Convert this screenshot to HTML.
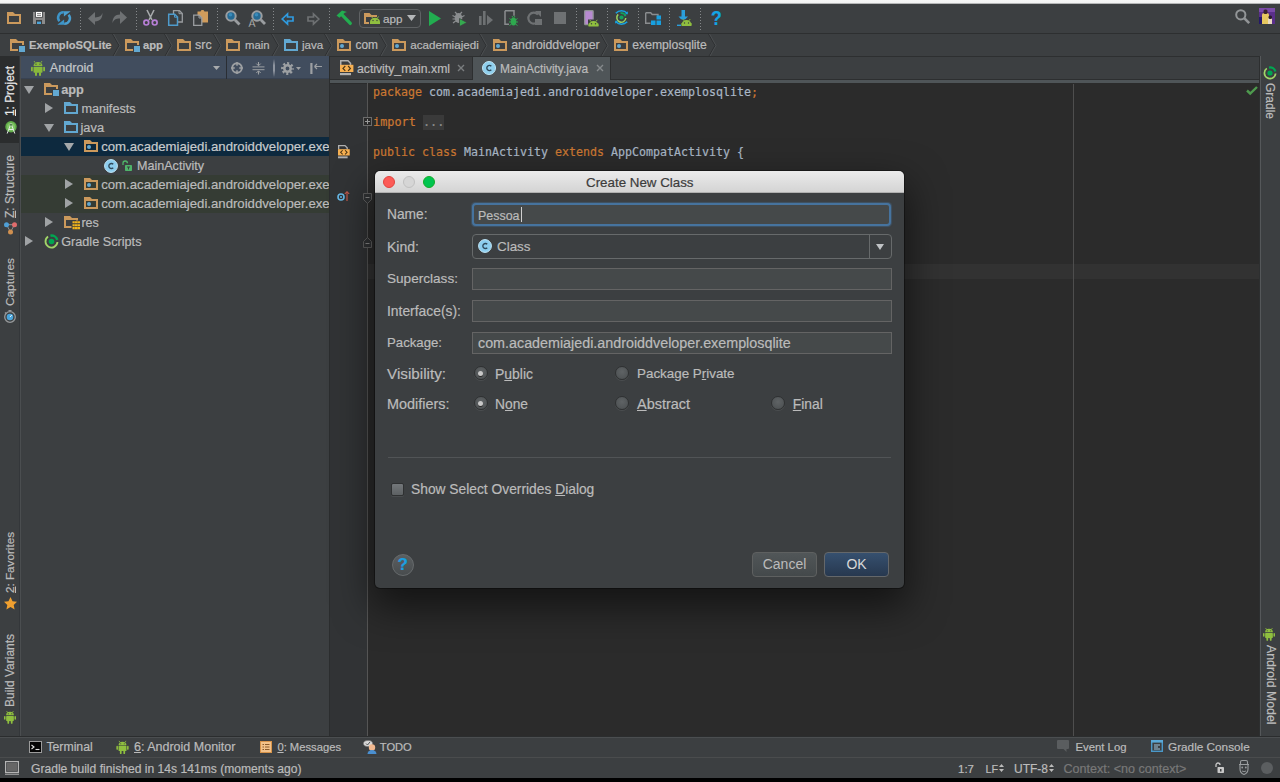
<!DOCTYPE html>
<html><head><meta charset="utf-8"><title>Create New Class</title>
<style>
*{box-sizing:border-box;margin:0;padding:0}
html,body{width:1280px;height:782px;overflow:hidden;background:#3c3f41}
body{position:relative;font-family:"Liberation Sans",sans-serif;font-size:13px;color:#bbbbbb;-webkit-font-smoothing:antialiased}
.a{position:absolute}
.t{position:absolute;white-space:nowrap;line-height:16px;height:16px;-webkit-text-stroke:0.2px}
svg{position:absolute;overflow:visible}
#topstrip{left:0;top:0;width:1280px;height:4px;background:linear-gradient(#f6f6f6 0,#f2f2f2 70%,#8a8c8d 100%)}
#toolbar{left:0;top:4px;width:1280px;height:29px;background:#3c3f41}
#tbline{left:0;top:33px;width:1280px;height:1px;background:#2d2f30}
#nav{left:0;top:34px;width:1280px;height:22px;background:#3c3f41}
.sep{position:absolute;top:8px;width:1px;height:22px;background:repeating-linear-gradient(#85888a 0 1px,transparent 1px 3px)}
.nv{top:37px;font-size:13px;color:#bbbbbb}
.chev{position:absolute;top:34px;width:7px;height:22px}
#lstripe{left:0;top:56px;width:20px;height:681px;background:#3c3f41}
#lstripeb{left:19px;top:56px;width:2px;height:681px;background:linear-gradient(90deg,#34373a 0 1px,#4b4e50 1px 2px)}
#lsel{left:0;top:56px;width:19px;height:87px;background:#2b2d2e}
.vt{position:absolute;white-space:nowrap;font-size:12px;line-height:14px;height:14px;color:#bbbbbb;transform-origin:0 0;-webkit-text-stroke:0.2px}
.vl{transform:rotate(-90deg)}
.vr{transform:rotate(90deg)}
#twh{left:21px;top:56px;width:308px;height:23px;background:#414d5e;border-bottom:1px solid #384252}
#tree{left:21px;top:79px;width:308px;height:658px;background:#3c3f41;overflow:hidden}
.row{position:absolute;left:0;width:308px;height:19px}
.tr{position:absolute;white-space:nowrap;font-size:13px;line-height:19px;height:19px;color:#bbbbbb;top:0;-webkit-text-stroke:0.2px}
#split{left:329px;top:56px;width:1.500px;height:681px;background:#2b2d2e}
#tabs{left:330px;top:56px;width:929px;height:24px;background:#3c3f41;border-top:1px solid #2d2f30;border-bottom:1px solid #2d2f30}
#tabline{left:330px;top:80px;width:929px;height:4px;background:#4f5558;border-bottom:1px solid #2a2b2c}
#gutter{left:330px;top:84px;width:37px;height:653px;background:#313335}
#gline{left:367px;top:83px;width:1px;height:654px;background:#555555}
#editor{left:368px;top:83px;width:891px;height:654px;background:#2b2b2b}
#curline{left:368px;top:264px;width:891px;height:15px;background:#323232}
#margin{left:1073px;top:84px;width:1px;height:652px;background:#4e4e4e}
.code{position:absolute;left:373px;white-space:pre;font-family:"DejaVu Sans Mono","Liberation Mono",monospace;font-size:11.8px;line-height:15px;height:15px;color:#a9b7c6;-webkit-text-stroke:0.2px}
.k{color:#cc7832}
#rstripe{left:1259px;top:56px;width:21px;height:681px;background:linear-gradient(90deg,#2d2f30 0 1px,#55585a 1px 2px,#3c3f41 2px)}
#bstripe{left:0;top:736px;width:1280px;height:22px;background:linear-gradient(#2b2d2e 0 1px,#4b4e50 1px 2px,#3c3f41 2px)}
#status{left:0;top:757px;width:1280px;height:21px;background:#3c3f41;border-top:1px solid #4a4c4d}
#bblack{left:0;top:778px;width:1280px;height:4px;background:#000}
.bt{font-size:12px;top:738.5px;color:#bbbbbb}
.st{font-size:12px;top:760.5px;color:#bbbbbb}
#dlg{left:375px;top:171px;width:529px;height:417px;background:#3c3f41;border-radius:5px;box-shadow:0 16px 38px 3px rgba(0,0,0,.55),0 0 0 1px rgba(0,0,0,.35);overflow:hidden}
#dtitle{left:0;top:0;width:529px;height:22px;background:linear-gradient(#ebebeb,#d4d4d4);border-bottom:1px solid #b0b0b0}
.tl{position:absolute;top:5px;width:12px;height:12px;border-radius:50%}
.dl{font-size:14px;color:#bbbbbb;left:12px}
.fld{position:absolute;left:97px;width:420px;height:22px;background:#45494a;border:1px solid #646464}
.u{text-decoration:underline}
.radio{position:absolute;width:14px;height:14px;border-radius:50%;background:radial-gradient(circle at 50% 40%,#5f6365,#4a4e50);border:1px solid #2f3132;box-shadow:0 1px 0 rgba(255,255,255,.08)}
.radio.on:after{content:"";position:absolute;left:3.5px;top:3.5px;width:5px;height:5px;border-radius:50%;background:#c8c8c8;box-shadow:0 1px 0 #2a2a2a}
.btn{position:absolute;top:381px;height:25px;width:65px;border-radius:4px;font-size:14px;line-height:23px;text-align:center;color:#bbbbbb;border:1px solid #5e6060;background:linear-gradient(#515658,#44494b)}
</style></head><body>
<div class="a" id="toolbar"></div>
<div class="a" id="topstrip"></div>
<div class="a" id="tbline"></div>
<div class="a" id="nav"></div>
<!--TOOLBAR-->
<svg style="left:7px;top:12px" width="14" height="12" viewBox="0 0 14 12"><path d="M0 0h6l2 2h6v10H0z" fill="#cb995c"></path><rect x="2" y="4" width="10" height="6" fill="#3c3f41"></rect></svg>
<svg style="left:33px;top:12px" width="12" height="12" viewBox="0 0 12 12"><path d="M0 0h12v12H0z" fill="#8c8c8c"></path><rect x="2.6" y="-0.5" width="6.8" height="5.8" fill="#fff" stroke="#3c3f41" stroke-width="0.8"></rect><path d="M4 1.6h4M4 3.4h4" stroke="#666" stroke-width="0.8"></path><rect x="3" y="8" width="6" height="4" fill="#3c3f41"></rect><rect x="4" y="9.6" width="4" height="2.4" fill="#4aa3d8"></rect></svg>
<svg style="left:57px;top:11px" width="14" height="14" viewBox="0 0 14 14"><path d="M6.800 1.300A5.400 5.400 0 0 0 2.400 10.200" fill="none" stroke="#3d94c8" stroke-width="2.500"></path><path d="M0.300 13.800h6.800v-5.200z" fill="#3d94c8"></path><path d="M7.200 12.700A5.400 5.400 0 0 0 11.600 3.800" fill="none" stroke="#4a9fd0" stroke-width="2.500"></path><path d="M13.700 0.200h-6.800v5.200z" fill="#4a9fd0"></path></svg>
<div class="sep" style="left:80px"></div><div class="sep" style="left:136px"></div><div class="sep" style="left:217px"></div><div class="sep" style="left:273px"></div><div class="sep" style="left:329px"></div><div class="sep" style="left:576px"></div><div class="sep" style="left:607px"></div><div class="sep" style="left:638px"></div><div class="sep" style="left:669px"></div><div class="sep" style="left:700px"></div>
<svg style="left:88px;top:12px" width="15" height="13" viewBox="0 0 15 13"><path transform="translate(0,13) scale(1,-1)" d="M0 6.500L7 0v3.600c5 0 7.500 3 7.500 8.600c-1.200-3.400-3.100-4.600-7.500-4.600V13z" fill="#6e7173"></path></svg>
<svg style="left:112px;top:11px" width="15" height="13" viewBox="0 0 15 13"><path transform="translate(15,0) scale(-1,1)" d="M0 6.500L7 0v3.600c5 0 7.500 3 7.500 8.600c-1.200-3.400-3.100-4.600-7.500-4.600V13z" fill="#6e7173"></path></svg>
<svg style="left:143px;top:10px" width="15" height="16" viewBox="0 0 15 16"><path d="M4 0l5 10M11 0L6 10" stroke="#a7aaac" stroke-width="1.6" fill="none"></path><circle cx="3.3" cy="12.6" r="2.4" fill="none" stroke="#b77fd6" stroke-width="1.7"></circle><circle cx="11.700" cy="12.6" r="2.4" fill="none" stroke="#b77fd6" stroke-width="1.7"></circle></svg>
<svg style="left:168px;top:10px" width="15" height="16" viewBox="0 0 15 16"><path d="M5.500 0.700h6l2.800 2.800v8.500h-8.800z" fill="#3c3f41" stroke="#9a9da0" stroke-width="1.300"></path><path d="M11 0.700v3h3" fill="none" stroke="#9a9da0" stroke-width="1"></path><path d="M0.700 4.200h6l2.800 2.800v8.300h-8.800z" fill="#3c3f41" stroke="#4e9bcc" stroke-width="1.500"></path><path d="M6.500 4.200v3h3" fill="none" stroke="#4e9bcc" stroke-width="1"></path></svg>
<svg style="left:193px;top:10px" width="15" height="16" viewBox="0 0 15 16"><path d="M4.500 1.500h3l1-1.500h2l1 1.500h3.500v11h-10.500z" fill="#d09c5c"></path><path d="M0.700 5.200h5.500l2.600 2.600v7.500h-8.100z" fill="#3c3f41" stroke="#9a9da0" stroke-width="1.3"></path><path d="M6 5.200v2.800h2.800" fill="none" stroke="#9a9da0" stroke-width="1"></path></svg>
<svg style="left:225px;top:10px" width="16" height="16" viewBox="0 0 16 16"><circle cx="6" cy="6" r="4.700" fill="#256a94" stroke="#9a9da0" stroke-width="2"></circle><circle cx="5.500" cy="4.800" r="1.800" fill="#3f93c4" opacity=".8"></circle><path d="M9.800 9.800l4.700 4.700" stroke="#9a9da0" stroke-width="2.800"></path></svg>
<svg style="left:249px;top:10px" width="17" height="17" viewBox="0 0 17 17"><circle cx="8" cy="6" r="4.700" fill="#256a94" stroke="#9a9da0" stroke-width="2"></circle><circle cx="7.500" cy="4.800" r="1.800" fill="#3f93c4" opacity=".8"></circle><path d="M11.800 9.800l4.200 4.200" stroke="#9a9da0" stroke-width="2.800"></path><text x="-0.500" y="16.500" font-family="Liberation Sans,sans-serif" font-size="10.500" fill="#d0d0d0" stroke="#3c3f41" stroke-width="0.300">A</text></svg>
<svg style="left:281px;top:13px" width="13" height="12" viewBox="0 0 13 12"><path d="M1.200 6l5.300-5v3h5.500v4h-5.500v3z" fill="#3c3f41" stroke="#2f9be0" stroke-width="1.700" stroke-linejoin="miter"></path></svg>
<svg style="left:307px;top:13px" width="13" height="12" viewBox="0 0 13 12"><path d="M11.800 6l-5.300-5v3h-5.500v4h5.500v3z" fill="#3c3f41" stroke="#6e7173" stroke-width="1.700"></path></svg>
<svg style="left:336px;top:10px" width="16" height="16" viewBox="0 0 16 16"><path d="M0.500 5.500l5.500-5l5 1.500l-2.200.8l-1.300 1.300l8 8.200a1.500 1.500 0 0 1-2.400 2.200l-8-8.300l-1.600 1.600z" fill="#22ad50"></path></svg>
<div class="a" style="left:359px;top:9px;width:62px;height:19px;border:1px solid #5f6264;border-radius:4px;background:#3c3f41"></div>
<svg style="left:364px;top:12.5px" width="13" height="11" viewBox="0 0 13 11"><path d="M0 0h5.500l2 2h5.500v9H0z" fill="#cb995c"></path><rect x="2" y="4" width="9" height="5" fill="#3c3f41"></rect></svg>
<svg style="left:369px;top:16px" width="12" height="8" viewBox="0 0 12 8"><rect x="0" y="1" width="12" height="7" fill="#3c3f41"></rect><path d="M1 6a5 4.200 0 0 1 10 0v2h-10z" fill="#8fbf3f"></path><path d="M2.500 0.500l1.200 1.800M9.500 0.500l-1.200 1.800" stroke="#8fbf3f" stroke-width="0.900"></path><circle cx="4" cy="4.500" r="0.650" fill="#3c3f41"></circle><circle cx="8" cy="4.500" r="0.650" fill="#3c3f41"></circle></svg>
<div class="t" style="left: 383px; top: 11px; font-size: 11.68px; color: rgb(187, 187, 187);">app</div>
<svg style="left:407px;top:15px" width="9" height="6" viewBox="0 0 9 6"><path d="M0 0h9l-4.500 6z" fill="#b4b7b9"></path></svg>
<svg style="left:429px;top:11px" width="12" height="15" viewBox="0 0 12 15"><path d="M0 0l12 7.500l-12 7.500z" fill="#22ad50"></path></svg>
<svg style="left:452px;top:10px" width="16" height="16" viewBox="0 0 16 16"><ellipse cx="6.500" cy="8" rx="3.800" ry="5" fill="#8a8d8f"></ellipse><path d="M3 2l2 2M10 2l-2 2M0.500 5.500l3 1.500M0.500 9h3M1 13l2.700-2M12.500 5.500l-3 1.500" stroke="#8a8d8f" stroke-width="1.200"></path><path d="M7.500 8.500l7.500 4l-7.500 4z" fill="#35a94f" stroke="#3c3f41" stroke-width="0.800"></path></svg>
<svg style="left:479px;top:11px" width="14" height="14" viewBox="0 0 14 14"><rect x="0" y="5" width="2.600" height="9" fill="#6e7173"></rect><rect x="4" y="0" width="2.600" height="14" fill="#6e7173"></rect><path d="M8 4l6 5l-6 5z" fill="#6e7173"></path></svg>
<svg style="left:504px;top:10px" width="14" height="17" viewBox="0 0 14 17"><path d="M1 0.700h9v5M1 0.700v13.600h4" fill="none" stroke="#8a8d8f" stroke-width="1.500"></path><ellipse cx="9.500" cy="11.500" rx="2.800" ry="4" fill="#2fa84f"></ellipse><path d="M5.500 8.500l2 1.500M13.500 8.500l-2 1.500M5 12h9M5.500 15.500l2-1.500M13.500 15.500l-2-1.500M8 6l1 1.500M11 6l-1 1.500" stroke="#2fa84f" stroke-width="1"></path></svg>
<svg style="left:527px;top:11px" width="15" height="14" viewBox="0 0 15 14"><path d="M11 3.500A5.500 5.500 0 1 0 12 9" fill="none" stroke="#6e7173" stroke-width="2.200"></path><path d="M8 0l6 0l0 6z" fill="#6e7173"></path><rect x="8" y="8" width="7" height="6" fill="#6e7173"></rect></svg>
<svg style="left:554px;top:12px" width="12" height="12" viewBox="0 0 12 12"><rect width="12" height="12" fill="#6e7173"></rect></svg>
<svg style="left:584px;top:9px" width="15" height="18" viewBox="0 0 15 18"><rect x="0.650" y="1.650" width="8.500" height="14" rx="0.800" fill="#b78ad0" stroke="#8f9294" stroke-width="1.300"></rect><rect x="4" y="10.500" width="11" height="7.500" fill="#3c3f41"></rect><path d="M4.500 17a5 5 0 0 1 10 0z" fill="#8fbf3f"></path><rect x="4.500" y="14.500" width="10" height="3" fill="#8fbf3f"></rect><path d="M5.800 10.800l1.200 1.800M13.200 10.800l-1.200 1.800" stroke="#8fbf3f" stroke-width="0.900"></path><circle cx="7.500" cy="14.800" r="0.700" fill="#3c3f41"></circle><circle cx="11.500" cy="14.800" r="0.700" fill="#3c3f41"></circle></svg>
<svg style="left:615px;top:10px" width="13" height="15" viewBox="0 0 13 15"><path d="M3.200 4.400A4.500 4.500 0 1 0 10.800 8" fill="none" stroke="#9bd05f" stroke-width="1.500"></path><path d="M5.500 3.200A4.400 4.400 0 0 1 10.500 6.200" fill="none" stroke="#12a45d" stroke-width="1.800"></path><circle cx="6.500" cy="7.500" r="2.100" fill="#12a45d"></circle><path d="M0.800 3.200a8 8 0 0 1 11.400 0" fill="none" stroke="#18a0e0" stroke-width="1.600"></path><path d="M12.800 1.200v3h-3z" fill="#18a0e0"></path><path d="M0.800 11.800a8 8 0 0 0 11.400 0" fill="none" stroke="#18a0e0" stroke-width="1.600"></path><path d="M0.200 13.800v-3h3z" fill="#18a0e0"></path></svg>
<svg style="left:645px;top:12px" width="16" height="13" viewBox="0 0 16 13"><path d="M0.700 0.700h5l1.500 1.800h5.800v1.500M0.700 0.700v10.600h4.800" fill="none" stroke="#8a8d8f" stroke-width="1.400"></path><rect x="11.500" y="3.500" width="4.500" height="4" fill="#18a0e0"></rect><rect x="6" y="8.500" width="4.500" height="4.500" fill="#18a0e0"></rect><rect x="11.500" y="8.500" width="4.500" height="4.500" fill="#18a0e0"></rect></svg>
<svg style="left:677px;top:10px" width="15" height="16" viewBox="0 0 15 16"><path d="M4.500 0h3.500v6.500h3l-4.750 5l-4.750-5h3z" fill="#2b9fdc"></path><path d="M0 15.300h4" stroke="#2b9fdc" stroke-width="1.400"></path><rect x="4" y="9.500" width="11" height="6.500" fill="#3c3f41"></rect><path d="M4.500 15a5 5 0 0 1 10 0z" fill="#8fbf3f"></path><rect x="4.500" y="13" width="10" height="3" fill="#8fbf3f"></rect><path d="M5.800 9l1.200 1.800M13.200 9l-1.200 1.800" stroke="#8fbf3f" stroke-width="0.900"></path><circle cx="7.500" cy="13" r="0.700" fill="#3c3f41"></circle><circle cx="11.500" cy="13" r="0.700" fill="#3c3f41"></circle></svg>
<div class="t" style="left:710.5px;top:6.500px;font-size:20px;line-height:22px;height:22px;font-weight:bold;color:#12a5e6;transform:scaleX(.88);transform-origin:0 0">?</div>
<svg style="left:1235px;top:9px" width="15" height="15" viewBox="0 0 15 15"><circle cx="5.800" cy="5.800" r="4.600" fill="none" stroke="#929597" stroke-width="2"></circle><path d="M9.200 9.200l5 5" stroke="#929597" stroke-width="2.600"></path></svg>
<svg style="left:1259px;top:8px" width="16" height="16" viewBox="0 0 16 16"><rect width="16" height="16" fill="#5a2f8a"></rect><rect x="0" y="0" width="16" height="4" fill="#7a4aa8"></rect><path d="M3 16V7q0-2 2-2h3q2 0 2 2v9z" fill="#e6c860"></path><rect x="4.500" y="1.500" width="4" height="4.500" rx="1.500" fill="#3a2330"></rect><path d="M9 16v-5q0-1.500 2-1.500t2 1.500v5z" fill="#e9d9c0"></path><rect x="9.500" y="7.500" width="3.500" height="3.500" rx="1.500" fill="#2a1c2a"></rect><rect x="0" y="9" width="3" height="7" fill="#24186a"></rect></svg>
<!--/TOOLBAR-->
<!--NAV-->
<svg style="left:10px;top:39px" width="16" height="14" viewBox="0 0 16 14"><path d="M0 0h6l2 2h6v10H0z" fill="#cb995c"></path><rect x="2" y="4" width="10" height="6" fill="#3c3f41"></rect><rect x="8" y="6" width="8" height="8" fill="#3c3f41"></rect><rect x="9" y="7" width="6" height="6" fill="#62a8d1"></rect></svg><div class="t nv" style="left: 29px; font-weight: bold; font-size: 11.18px;">ExemploSQLite</div><svg style="left:112px;top:34px" width="8" height="23" viewBox="0 0 8 23"><path d="M0.5 0l6.5 11.5L0.5 23" fill="none" stroke="#2d2f31" stroke-width="1"></path><path d="M1.5 0l6.5 11.5L1.5 23" fill="none" stroke="#4b4e50" stroke-width="1"></path></svg>
<svg style="left:125px;top:39px" width="16" height="14" viewBox="0 0 16 14"><path d="M0 0h6l2 2h6v10H0z" fill="#cb995c"></path><rect x="2" y="4" width="10" height="6" fill="#3c3f41"></rect><rect x="8" y="6" width="8" height="8" fill="#3c3f41"></rect><rect x="9" y="7" width="6" height="6" fill="#62a8d1"></rect></svg><div class="t nv" style="left: 143px; font-weight: bold; font-size: 11.24px;">app</div><svg style="left:164px;top:34px" width="8" height="23" viewBox="0 0 8 23"><path d="M0.5 0l6.5 11.5L0.5 23" fill="none" stroke="#2d2f31" stroke-width="1"></path><path d="M1.5 0l6.5 11.5L1.5 23" fill="none" stroke="#4b4e50" stroke-width="1"></path></svg>
<svg style="left:177px;top:39px" width="16" height="14" viewBox="0 0 16 14"><path d="M0 0h6l2 2h6v10H0z" fill="#cb995c"></path><rect x="2" y="4" width="10" height="6" fill="#3c3f41"></rect></svg><div class="t nv" style="left: 195px; font-size: 12.54px;">src</div><svg style="left:213px;top:34px" width="8" height="23" viewBox="0 0 8 23"><path d="M0.5 0l6.5 11.5L0.5 23" fill="none" stroke="#2d2f31" stroke-width="1"></path><path d="M1.5 0l6.5 11.5L1.5 23" fill="none" stroke="#4b4e50" stroke-width="1"></path></svg>
<svg style="left:226px;top:39px" width="16" height="14" viewBox="0 0 16 14"><path d="M0 0h6l2 2h6v10H0z" fill="#cb995c"></path><rect x="2" y="4" width="10" height="6" fill="#3c3f41"></rect></svg><div class="t nv" style="left: 245px; font-size: 11.3px;">main</div><svg style="left:270.5px;top:34px" width="8" height="23" viewBox="0 0 8 23"><path d="M0.5 0l6.5 11.5L0.5 23" fill="none" stroke="#2d2f31" stroke-width="1"></path><path d="M1.5 0l6.5 11.5L1.5 23" fill="none" stroke="#4b4e50" stroke-width="1"></path></svg>
<svg style="left:284px;top:39px" width="16" height="14" viewBox="0 0 16 14"><path d="M0 0h6l2 2h6v10H0z" fill="#62a8d1"></path><rect x="2" y="4" width="10" height="6" fill="#3c3f41"></rect></svg><div class="t nv" style="left: 302px; font-size: 11.61px;">java</div><svg style="left:323.7px;top:34px" width="8" height="23" viewBox="0 0 8 23"><path d="M0.5 0l6.5 11.5L0.5 23" fill="none" stroke="#2d2f31" stroke-width="1"></path><path d="M1.5 0l6.5 11.5L1.5 23" fill="none" stroke="#4b4e50" stroke-width="1"></path></svg>
<svg style="left:337px;top:39px" width="16" height="14" viewBox="0 0 16 14"><path d="M0 0h6l2 2h6v10H0z" fill="#cb995c"></path><rect x="2" y="4" width="10" height="6" fill="#3c3f41"></rect><circle cx="5" cy="7" r="2" fill="#62a8d1"></circle></svg><div class="t nv" style="left: 355.5px; font-size: 11.91px;">com</div><svg style="left:378.5px;top:34px" width="8" height="23" viewBox="0 0 8 23"><path d="M0.5 0l6.5 11.5L0.5 23" fill="none" stroke="#2d2f31" stroke-width="1"></path><path d="M1.5 0l6.5 11.5L1.5 23" fill="none" stroke="#4b4e50" stroke-width="1"></path></svg>
<svg style="left:392px;top:39px" width="16" height="14" viewBox="0 0 16 14"><path d="M0 0h6l2 2h6v10H0z" fill="#cb995c"></path><rect x="2" y="4" width="10" height="6" fill="#3c3f41"></rect><circle cx="5" cy="7" r="2" fill="#62a8d1"></circle></svg><div class="t nv" style="left: 410.3px; font-size: 11.61px;">academiajedi</div><svg style="left:479.4px;top:34px" width="8" height="23" viewBox="0 0 8 23"><path d="M0.5 0l6.5 11.5L0.5 23" fill="none" stroke="#2d2f31" stroke-width="1"></path><path d="M1.5 0l6.5 11.5L1.5 23" fill="none" stroke="#4b4e50" stroke-width="1"></path></svg>
<svg style="left:493px;top:39px" width="16" height="14" viewBox="0 0 16 14"><path d="M0 0h6l2 2h6v10H0z" fill="#cb995c"></path><rect x="2" y="4" width="10" height="6" fill="#3c3f41"></rect><circle cx="5" cy="7" r="2" fill="#62a8d1"></circle></svg><div class="t nv" style="left: 511.2px; font-size: 12.35px;">androiddveloper</div><svg style="left:600.3px;top:34px" width="8" height="23" viewBox="0 0 8 23"><path d="M0.5 0l6.5 11.5L0.5 23" fill="none" stroke="#2d2f31" stroke-width="1"></path><path d="M1.5 0l6.5 11.5L1.5 23" fill="none" stroke="#4b4e50" stroke-width="1"></path></svg>
<svg style="left:614px;top:39px" width="16" height="14" viewBox="0 0 16 14"><path d="M0 0h6l2 2h6v10H0z" fill="#cb995c"></path><rect x="2" y="4" width="10" height="6" fill="#3c3f41"></rect><circle cx="5" cy="7" r="2" fill="#62a8d1"></circle></svg><div class="t nv" style="left: 632.3px; font-size: 12.18px;">exemplosqlite</div><svg style="left:708px;top:34px" width="8" height="23" viewBox="0 0 8 23"><path d="M0.5 0l6.5 11.5L0.5 23" fill="none" stroke="#2d2f31" stroke-width="1"></path><path d="M1.5 0l6.5 11.5L1.5 23" fill="none" stroke="#4b4e50" stroke-width="1"></path></svg>
<!--/NAV-->
<div class="a" id="lstripe"></div><div class="a" id="lsel"></div><div class="a" id="lstripeb"></div>
<!--LSTRIPE-->
<div class="vt vl" style="left: 2.5px; top: 116px; color: rgb(232, 232, 232); font-size: 11.85px;"><span class="u">1</span>: Project</div>
<div class="vt vl" style="left: 3px; top: 218px; font-size: 12.07px;"><span class="u">Z</span>: Structure</div>
<div class="vt vl" style="left: 3px; top: 306px; font-size: 11.83px;">Captures</div>
<div class="vt vl" style="left: 3px; top: 593px; font-size: 11.68px;"><span class="u">2</span>: Favorites</div>
<div class="vt vl" style="left: 3px; top: 707px; font-size: 11.99px;">Build Variants</div>
<svg style="left:4.5px;top:120.5px" width="12" height="14" viewBox="0 0 12 14"><circle cx="6" cy="5.800" r="5.700" fill="#62ad4a"></circle><circle cx="6" cy="5.800" r="4" fill="#80c565"></circle><path d="M6 2.500l-3.800 10M6 2.500l3.800 10M3.800 8.500h4.400" stroke="#e4ece4" stroke-width="1" fill="none"></path><circle cx="6" cy="3.800" r="1.100" fill="#4f7a4a"></circle></svg>
<svg style="left:3px;top:221px" width="15" height="16" viewBox="0 0 15 16"><path d="M3.500 3.700l4 7.300M11.500 3.700l-4 7.300M3.500 3.700h8" stroke="#9a9a9a" stroke-width="0.900" fill="none"></path><circle cx="3.500" cy="3.700" r="2.500" fill="#4f9fd6"></circle><circle cx="11.500" cy="3.700" r="2.500" fill="#e06c6c"></circle><circle cx="7.500" cy="11" r="2.500" fill="#d09050"></circle></svg>
<svg style="left:4px;top:310px" width="12" height="13" viewBox="0 0 12 13"><circle cx="6" cy="7" r="5.300" fill="#3c3f41" stroke="#96999b" stroke-width="1.300"></circle><circle cx="6" cy="7" r="3.300" fill="#4aa5dc"></circle><path d="M6 7l1.800-2" stroke="#e8f4fb" stroke-width="1"></path><path d="M4.500 0.600h3M1 2.500l1.200 1.200" stroke="#96999b" stroke-width="1.200"></path></svg>
<svg style="left:4px;top:597px" width="13" height="13" viewBox="0 0 13 13"><path d="M6.500 0l2 4.300l4.500.5l-3.300 3.100l.9 4.600l-4.100-2.400l-4.100 2.400l.9-4.600L0 4.800l4.500-.5z" fill="#f0a030"></path></svg>
<svg style="left:4px;top:710px" width="12" height="14" viewBox="0 0 14 16"><path d="M3 1l1.2 1.8M11 1l-1.2 1.8" stroke="#8fbf3f" stroke-width="0.9"></path><path d="M2.5 6a4.5 4 0 0 1 9 0z" fill="#8fbf3f"></path><rect x="2.5" y="6.7" width="9" height="6" rx="0.8" fill="#8fbf3f"></rect><rect x="0" y="6.7" width="1.8" height="4.6" rx="0.9" fill="#8fbf3f"></rect><rect x="12.2" y="6.7" width="1.8" height="4.6" rx="0.9" fill="#8fbf3f"></rect><rect x="4" y="12" width="2" height="4" rx="1" fill="#8fbf3f"></rect><rect x="8" y="12" width="2" height="4" rx="1" fill="#8fbf3f"></rect><circle cx="5" cy="4.2" r="0.6" fill="#3c3f41"></circle><circle cx="9" cy="4.2" r="0.6" fill="#3c3f41"></circle></svg><!--/LSTRIPE-->
<div class="a" id="twh"></div>
<!--TWH-->
<svg style="left:31px;top:59.5px" width="14" height="16" viewBox="0 0 14 16"><path d="M3 1l1.2 1.8M11 1l-1.2 1.8" stroke="#88b83c" stroke-width="0.9"></path><path d="M2.5 6a4.5 4 0 0 1 9 0z" fill="#88b83c"></path><rect x="2.5" y="6.7" width="9" height="6" rx="0.8" fill="#88b83c"></rect><rect x="0" y="6.7" width="1.8" height="4.6" rx="0.9" fill="#88b83c"></rect><rect x="12.2" y="6.7" width="1.8" height="4.6" rx="0.9" fill="#88b83c"></rect><rect x="4" y="12" width="2" height="4" rx="1" fill="#88b83c"></rect><rect x="8" y="12" width="2" height="4" rx="1" fill="#88b83c"></rect><circle cx="5" cy="4.2" r="0.6" fill="#3c3f41"></circle><circle cx="9" cy="4.2" r="0.6" fill="#3c3f41"></circle></svg><div class="t" style="left: 49.7px; top: 60px; font-size: 12.68px; color: rgb(196, 199, 201);">Android</div>
<svg style="left:213px;top:66px" width="7" height="4" viewBox="0 0 7 4"><path d="M0 0h7l-3.500 4z" fill="#a8abad"></path></svg>
<div class="a" style="left:226px;top:56px;width:1px;height:23px;background:#2a2e34"></div><svg style="left:231px;top:62px" width="12" height="12" viewBox="0 0 12 12"><circle cx="6" cy="6" r="4.800" fill="none" stroke="#9da0a3" stroke-width="1.900"></circle><path d="M6 0v3.800M6 8.200v3.800M0 6h3.800M8.200 6h3.800" stroke="#9da0a3" stroke-width="1.500"></path></svg>
<svg style="left:252px;top:62px" width="13" height="13" viewBox="0 0 13 13"><path d="M0.500 4.900h12M0.500 7.700h12" stroke="#9da0a3" stroke-width="1"></path><path d="M6.500 0v3.500M6.500 12.600v-3.500" stroke="#9da0a3" stroke-width="1.100"></path><path d="M4.300 1.600l2.200 2.200l2.200-2.200M4.300 11l2.200-2.200l2.200 2.200" fill="none" stroke="#9da0a3" stroke-width="1"></path></svg>
<div class="a" style="left:273px;top:59px;width:2px;height:18px;background:linear-gradient(rgba(140,146,156,0),rgba(150,156,166,.9) 35%,rgba(150,156,166,.9) 65%,rgba(140,146,156,0))"></div><svg style="left:281px;top:62px" width="13" height="13" viewBox="0 0 13 13"><circle cx="6.500" cy="6.500" r="4.900" fill="none" stroke="#9da0a3" stroke-width="3" stroke-dasharray="1.950 1.900" stroke-dashoffset="0.970"></circle><circle cx="6.500" cy="6.500" r="3.200" fill="none" stroke="#9da0a3" stroke-width="2.600"></circle></svg>
<svg style="left:296px;top:67px" width="5" height="3" viewBox="0 0 5 3"><path d="M0 0h5l-2.500 3z" fill="#9da0a3"></path></svg>
<svg style="left:310px;top:62px" width="12" height="12" viewBox="0 0 12 12"><rect x="0.300" y="1" width="2.200" height="11" fill="#9da0a3"></rect><path d="M4.500 4.500h7.500M4.500 4.500l2.500-2.500M4.500 4.500l2.500 2.500" stroke="#9da0a3" stroke-width="1.200" fill="none"></path></svg>
<!--/TWH-->
<div class="a" id="tree">
<!--TREE-->
<div class="row" style="top:58px;background:#0d293e"></div>
<div class="row" style="top:96px;height:38px;background:#353c34"></div>
<svg style="left:3px;top:7px" width="10" height="8" viewBox="0 0 10 8"><path d="M0 0h10l-5 8z" fill="#a0a3a5"></path></svg><svg style="left:23px;top:4px" width="16" height="14" viewBox="0 0 16 14"><path d="M0 0h6l2 2h6v10H0z" fill="#cb995c"></path><rect x="2" y="4" width="10" height="6" fill="#3c3f41"></rect><rect x="8" y="6" width="8" height="8" fill="#3c3f41"></rect><rect x="9" y="7" width="6" height="6" fill="#62a8d1"></rect></svg><div class="tr" style="left: 40.2px; top: 1px; font-weight: bold; font-size: 12.71px;">app</div>
<svg style="left:24px;top:24px" width="8" height="10" viewBox="0 0 8 10"><path d="M0 0v10l8-5z" fill="#a0a3a5"></path></svg><svg style="left:43px;top:23px" width="16" height="14" viewBox="0 0 16 14"><path d="M0 0h6l2 2h6v10H0z" fill="#62a8d1"></path><rect x="2" y="4" width="10" height="6" fill="#3c3f41"></rect></svg><div class="tr" style="left: 60.4px; top: 21px; font-size: 12.68px;">manifests</div>
<svg style="left:23px;top:45px" width="10" height="8" viewBox="0 0 10 8"><path d="M0 0h10l-5 8z" fill="#a0a3a5"></path></svg><svg style="left:43px;top:42px" width="16" height="14" viewBox="0 0 16 14"><path d="M0 0h6l2 2h6v10H0z" fill="#62a8d1"></path><rect x="2" y="4" width="10" height="6" fill="#3c3f41"></rect></svg><div class="tr" style="left: 59.5px; top: 39px; font-size: 12.82px;">java</div>
<svg style="left:43px;top:64px" width="10" height="8" viewBox="0 0 10 8"><path d="M0 0h10l-5 8z" fill="#a5a8aa"></path></svg><svg style="left:63px;top:61px" width="16" height="14" viewBox="0 0 16 14"><path d="M0 0h6l2 2h6v10H0z" fill="#cb995c"></path><rect x="2" y="4" width="10" height="6" fill="#0d293e"></rect><circle cx="5" cy="7" r="2" fill="#62a8d1"></circle></svg><div class="tr" style="left: 80.2px; top: 58px; color: rgb(200, 203, 205); font-size: 13.18px;">com.academiajedi.androiddveloper.exe</div>
<svg style="left:83px;top:79.5px" width="14" height="14" viewBox="0 0 14 14"><circle cx="7" cy="7" r="6.4" fill="#8ccdee" stroke="#c2e7f8" stroke-width="1"></circle><path d="M9.2 5.3a2.5 2.5 0 1 0 0 3.4" stroke="#2f4a5c" stroke-width="1.4" fill="none"></path></svg><svg style="left:101px;top:81px" width="10" height="11" viewBox="0 0 10 11"><path d="M1 5V3.200a2.200 2.200 0 0 1 4.400 0" fill="none" stroke="#4fb36a" stroke-width="1.300"></path><rect x="3" y="5" width="7" height="6" rx="0.800" fill="#4fb36a"></rect><path d="M5 7h3M6.500 7v2.500" stroke="#3c3f41" stroke-width="1"></path></svg>
<div class="tr" style="left: 116px; top: 78px; font-size: 12.57px;">MainActivity</div>
<svg style="left:44px;top:100px" width="8" height="10" viewBox="0 0 8 10"><path d="M0 0v10l8-5z" fill="#a0a3a5"></path></svg><svg style="left:63px;top:99px" width="16" height="14" viewBox="0 0 16 14"><path d="M0 0h6l2 2h6v10H0z" fill="#cb995c"></path><rect x="2" y="4" width="10" height="6" fill="#353c34"></rect><circle cx="5" cy="7" r="2" fill="#62a8d1"></circle></svg><div class="tr" style="left: 80.2px; top: 96px; font-size: 13.18px;">com.academiajedi.androiddveloper.exe</div>
<svg style="left:44px;top:119px" width="8" height="10" viewBox="0 0 8 10"><path d="M0 0v10l8-5z" fill="#a0a3a5"></path></svg><svg style="left:63px;top:118px" width="16" height="14" viewBox="0 0 16 14"><path d="M0 0h6l2 2h6v10H0z" fill="#cb995c"></path><rect x="2" y="4" width="10" height="6" fill="#353c34"></rect><circle cx="5" cy="7" r="2" fill="#62a8d1"></circle></svg><div class="tr" style="left: 80.2px; top: 115px; font-size: 13.18px;">com.academiajedi.androiddveloper.exe</div>
<svg style="left:24px;top:138px" width="8" height="10" viewBox="0 0 8 10"><path d="M0 0v10l8-5z" fill="#a0a3a5"></path></svg><svg style="left:43px;top:137px" width="16" height="14" viewBox="0 0 16 14"><path d="M0 0h6l2 2h6v10H0z" fill="#cb995c"></path><rect x="2" y="4" width="10" height="6" fill="#3c3f41"></rect><rect x="7.5" y="4.5" width="8.5" height="9.5" fill="#3c3f41"></rect><path d="M8.5 6.3h7.5M8.5 9.2h7.5M8.5 12.1h7.5" stroke="#f0b41e" stroke-width="2.1"></path><path d="M10.5 5.2v8M13.500 5.2v8" stroke="#7a5a10" stroke-width="0.5" opacity=".6"></path></svg><div class="tr" style="left: 60.4px; top: 135px; font-size: 12.54px;">res</div>
<svg style="left:4px;top:157px" width="8" height="10" viewBox="0 0 8 10"><path d="M0 0v10l8-5z" fill="#a0a3a5"></path></svg><svg style="left:22.5px;top:155px" width="15" height="15" viewBox="0 0 14 14"><path d="M3.790 2.410A5.600 5.600 0 1 0 12.580 7.490" fill="none" stroke="#a0d568" stroke-width="1.700"></path><path d="M6.030 1.600A5.500 5.500 0 0 1 12.400 5.550" fill="none" stroke="#00a651" stroke-width="2.300"></path><circle cx="7" cy="7" r="2.600" fill="#00a651"></circle></svg><div class="tr" style="left: 40.2px; top: 154px; font-size: 12.68px;">Gradle Scripts</div>
<!--/TREE-->
</div>
<div class="a" id="split"></div>
<div class="a" id="tabs"></div><div class="a" id="tabline"></div>
<!--TABS-->
<div class="a" style="left:330px;top:57px;width:143px;height:22px;background:#3b3d3f;border-right:1px solid #2d2f30"></div>
<div class="a" style="left:473px;top:57px;width:138px;height:23px;background:#4f5558;border-right:1px solid #2d2f30"></div>
<svg style="left:340px;top:60px" width="14" height="16" viewBox="0 0 14 16"><path d="M0.750 5V0.750h7.250l2.500 2.500V5" fill="none" stroke="#b0b0b0" stroke-width="1.500"></path><rect x="0" y="4.800" width="13.400" height="7.200" fill="#f7b052"></rect><rect x="0" y="13" width="11" height="2.200" fill="#b0b0b0"></rect><path d="M5.300 6l-2.300 2.400l2.300 2.400M8.100 6l2.300 2.400l-2.300 2.400" stroke="#4a3515" stroke-width="1.200" fill="none"></path></svg>
<div class="t" id="tab1" style="left: 357px; top: 60.5px; font-size: 12.22px; color: rgb(187, 187, 187);">activity_main.xml</div>
<svg style="left:457px;top:64px" width="8" height="8" viewBox="0 0 8 8"><path d="M1 1l6 6M7 1l-6 6" stroke="#7a7d7f" stroke-width="1.4"></path></svg>
<svg style="left:482px;top:61px" width="14" height="14" viewBox="0 0 14 14"><circle cx="7" cy="7" r="6.5" fill="#8fd0ee" stroke="#bfe6f7" stroke-width="1"></circle><path d="M9.3 5.2a2.6 2.6 0 1 0 0 3.6" stroke="#2f4a5c" stroke-width="1.4" fill="none"></path></svg>
<div class="t" id="tab2" style="left: 500px; top: 60.5px; font-size: 11.98px; color: rgb(187, 187, 187);">MainActivity.java</div>
<svg style="left:596px;top:64px" width="8" height="8" viewBox="0 0 8 8"><path d="M1 1l6 6M7 1l-6 6" stroke="#868a8c" stroke-width="1.4"></path></svg>
<!--/TABS-->
<div class="a" id="gutter"></div><div class="a" id="editor"></div><div class="a" id="curline"></div><div class="a" id="gline"></div><div class="a" id="margin"></div>
<!--CODE-->
<div class="code" style="top: 85px; font-size: 11.64px;"><span class="k">package</span> com.academiajedi.androiddveloper.exemplosqlite<span class="k">;</span></div>
<div class="code" style="top:115px;font-size:11.85px"><span class="k">import</span> <span style="background:#3a3a3a;color:#8c8c8c;display:inline-block;height:15px;padding:0;margin-left:0">...</span></div>
<div class="code" style="top: 145px; font-size: 11.63px;"><span class="k">public class</span> MainActivity <span class="k">extends</span> AppCompatActivity {</div>
<svg style="left:363px;top:117px" width="9" height="9" viewBox="0 0 9 9"><rect x="0.5" y="0.5" width="8" height="8" fill="#2b2b2b" stroke="#6c6c6c"></rect><path d="M2 4.5h5M4.5 2v5" stroke="#9a9a9a" stroke-width="1"></path></svg>
<svg style="left:363px;top:193px" width="9" height="11" viewBox="0 0 9 11"><path d="M0.5 0.5h8v6l-4 4l-4-4z" fill="#313335" stroke="#606060"></path><path d="M2.5 4.5h4" stroke="#8a8a8a"></path></svg>
<svg style="left:363px;top:237px" width="9" height="11" viewBox="0 0 9 11"><path d="M0.5 10.5h8v-6l-4-4l-4 4z" fill="#313335" stroke="#606060"></path><path d="M2.5 6.5h4" stroke="#8a8a8a"></path></svg>
<svg style="left:337px;top:190px" width="13" height="12" viewBox="0 0 13 12"><circle cx="4" cy="7" r="3" fill="none" stroke="#66b8e6" stroke-width="1.6"></circle><circle cx="4" cy="7" r="1" fill="#66b8e6"></circle><path d="M10 11V2M7.8 4l2.2-2.5L12.2 4" stroke="#e0604f" stroke-width="1" fill="none"></path></svg>
<svg style="left:337.5px;top:144.5px" width="12.25" height="14" viewBox="0 0 14 16"><path d="M0.750 5V0.750h7.250l2.500 2.500V5" fill="none" stroke="#b0b0b0" stroke-width="1.500"></path><rect x="0" y="4.800" width="13.400" height="7.200" fill="#f7b052"></rect><rect x="0" y="13" width="11" height="2.200" fill="#b0b0b0"></rect><path d="M5.300 6l-2.300 2.400l2.300 2.400M8.100 6l2.300 2.400l-2.300 2.400" stroke="#4a3515" stroke-width="1.200" fill="none"></path></svg>
<svg style="left:1246px;top:86px" width="12" height="9" viewBox="0 0 12 9"><path d="M1 4.5l3.2 3L11 1" stroke="#4e9a4e" stroke-width="2.4" fill="none"></path></svg>
<!--/CODE-->
<div class="a" id="rstripe"></div>
<!--RSTRIPE-->
<svg style="left:1262.5px;top:65.5px" width="14" height="14" viewBox="0 0 14 14"><path d="M3.790 2.410A5.600 5.600 0 1 0 12.580 7.490" fill="none" stroke="#a0d568" stroke-width="1.700"></path><path d="M6.030 1.600A5.500 5.500 0 0 1 12.400 5.550" fill="none" stroke="#00a651" stroke-width="2.300"></path><circle cx="7" cy="7" r="2.600" fill="#00a651"></circle></svg><div class="vt vr" style="left: 1277px; top: 83px; font-size: 11.99px;">Gradle</div>
<svg style="left:1263px;top:627px" width="12" height="14" viewBox="0 0 14 16"><path d="M3 1l1.2 1.8M11 1l-1.2 1.8" stroke="#8fbf3f" stroke-width="0.9"></path><path d="M2.5 6a4.5 4 0 0 1 9 0z" fill="#8fbf3f"></path><rect x="2.5" y="6.7" width="9" height="6" rx="0.8" fill="#8fbf3f"></rect><rect x="0" y="6.7" width="1.8" height="4.6" rx="0.9" fill="#8fbf3f"></rect><rect x="12.2" y="6.7" width="1.8" height="4.6" rx="0.9" fill="#8fbf3f"></rect><rect x="4" y="12" width="2" height="4" rx="1" fill="#8fbf3f"></rect><rect x="8" y="12" width="2" height="4" rx="1" fill="#8fbf3f"></rect><circle cx="5" cy="4.2" r="0.6" fill="#3c3f41"></circle><circle cx="9" cy="4.2" r="0.6" fill="#3c3f41"></circle></svg><div class="vt vr" style="left: 1277.5px; top: 644.5px; font-size: 12.33px;">Android Model</div>
<!--/RSTRIPE-->
<div class="a" id="bstripe"></div><div class="a" id="status"></div><div class="a" id="bblack"></div>
<!--BOTTOM-->
<svg style="left:29px;top:741px" width="13" height="12" viewBox="0 0 13 12"><rect x="0.500" y="0.500" width="12" height="11" fill="#050505" stroke="#9c9c9c" stroke-width="1"></rect><path d="M2.500 4l2.500 2l-2.500 2" stroke="#e0e0e0" stroke-width="1.100" fill="none"></path><path d="M6.500 8.500h4" stroke="#e0e0e0" stroke-width="1.100"></path></svg>
<div class="t bt" style="left: 46.4px; font-size: 12.28px;">Terminal</div>
<svg style="left:116px;top:740px" width="13" height="14" viewBox="0 0 14 16"><path d="M3 1l1.2 1.8M11 1l-1.2 1.8" stroke="#8fbf3f" stroke-width="0.9"></path><path d="M2.5 6a4.5 4 0 0 1 9 0z" fill="#8fbf3f"></path><rect x="2.5" y="6.7" width="9" height="6" rx="0.8" fill="#8fbf3f"></rect><rect x="0" y="6.7" width="1.8" height="4.6" rx="0.9" fill="#8fbf3f"></rect><rect x="12.2" y="6.7" width="1.8" height="4.6" rx="0.9" fill="#8fbf3f"></rect><rect x="4" y="12" width="2" height="4" rx="1" fill="#8fbf3f"></rect><rect x="8" y="12" width="2" height="4" rx="1" fill="#8fbf3f"></rect><circle cx="5" cy="4.2" r="0.6" fill="#3c3f41"></circle><circle cx="9" cy="4.2" r="0.6" fill="#3c3f41"></circle></svg><div class="t bt" style="left: 134px; font-size: 12.51px;"><span class="u">6</span>: Android Monitor</div>
<svg style="left:260px;top:741px" width="12" height="12" viewBox="0 0 12 12"><rect x="0.500" y="0.500" width="11" height="11" fill="#f3c28a" stroke="#d8944a"></rect><path d="M2.500 3.500h1.500M5 3.500h4.500M2.500 6h1.500M5 6h4.500M2.500 8.500h1.500M5 8.500h4.500" stroke="#8a5a2a" stroke-width="1"></path></svg>
<div class="t bt" style="left: 277.4px; font-size: 11.22px;"><span class="u">0</span>: Messages</div>
<svg style="left:363px;top:740px" width="14" height="14" viewBox="0 0 14 14"><ellipse cx="5" cy="3.500" rx="4.500" ry="3" fill="#d8d8d8" stroke="#7a7a7a" stroke-width="0.800"></ellipse><path d="M3 3.500l1.500 1.500l2.500-3" stroke="#444" stroke-width="0.900" fill="none"></path><circle cx="9" cy="7.500" r="3.200" fill="#f0b890"></circle><path d="M4.500 14a4.500 4 0 0 1 9 0z" fill="#4a8fd0"></path></svg>
<div class="t bt" style="left: 379.8px; font-size: 11.15px;">TODO</div>
<svg style="left:1057px;top:740px" width="12" height="12" viewBox="0 0 12 12"><path d="M1 0h10a1 1 0 0 1 1 1v7a1 1 0 0 1-1 1h-1.500v3l-3-3H1a1 1 0 0 1-1-1V1a1 1 0 0 1 1-1z" fill="#5a5d5f"></path></svg>
<div class="t bt" style="left: 1075.5px; font-size: 11.33px;">Event Log</div>
<svg style="left:1151px;top:740px" width="12" height="12" viewBox="0 0 12 12"><rect x="0.700" y="0.700" width="10.600" height="10.600" fill="#3c3f41" stroke="#4a98c9" stroke-width="1.400"></rect><rect x="0" y="0" width="12" height="2.600" fill="#5aa9d8"></rect><path d="M3 5h6M3 7h4M3 9h6" stroke="#9ec7e0" stroke-width="1"></path></svg>
<div class="t bt" style="left: 1168px; font-size: 11.77px;">Gradle Console</div>
<svg style="left:5px;top:761px" width="14" height="14" viewBox="0 0 14 14"><rect x="0.600" y="0.600" width="12.800" height="10.800" fill="#3c3f41" stroke="#b4b4b4" stroke-width="1.200"></rect><rect x="2" y="2" width="10" height="8" fill="#666"></rect><path d="M0 13.200h14" stroke="#b4b4b4" stroke-width="1"></path></svg>
<div class="t st" style="left: 31px; font-size: 12.11px;">Gradle build finished in 14s 141ms (moments ago)</div>
<div class="t st" style="left: 958px; font-size: 11.51px;">1:7</div>
<div class="t st" style="left: 985.4px; font-size: 10.79px;">LF</div>
<div class="t st" style="left: 1014px; font-size: 12px;">UTF-8</div>
<svg style="left:998.5px;top:764px" width="5" height="8" viewBox="0 0 5 8"><path d="M0 3l2.500-3l2.500 3zM0 5l2.500 3l2.500-3z" fill="#bbbbbb"></path></svg>
<svg style="left:1048.5px;top:764px" width="5" height="8" viewBox="0 0 5 8"><path d="M0 3l2.500-3l2.500 3zM0 5l2.500 3l2.500-3z" fill="#bbbbbb"></path></svg>
<div class="t st" style="left: 1063.4px; color: rgb(120, 120, 120); font-size: 12.57px;">Context: &lt;no context&gt;</div>
<svg style="left:1215px;top:762px" width="9" height="11" viewBox="0 0 9 11"><path d="M1 5V3a2 2 0 0 1 4 0" fill="none" stroke="#c8c8c8" stroke-width="1.300"></path><rect x="2.500" y="5" width="6.500" height="6" rx="0.800" fill="#c8c8c8"></rect><rect x="5" y="7" width="1.500" height="2.500" fill="#3c3f41"></rect></svg>
<svg style="left:1238px;top:760px" width="12" height="15" viewBox="0 0 12 15"><path d="M1 4.500h10M2.500 4.500v-2.500q0-1.500 1.500-1.500h4q1.500 0 1.500 1.500v2.500" fill="none" stroke="#9a9d9f" stroke-width="1.100"></path><path d="M2 5v4q0 4 4 5.500q4-1.500 4-5.500v-4" fill="none" stroke="#9a9d9f" stroke-width="1.100"></path><circle cx="4.200" cy="7.500" r="0.900" fill="#9a9d9f"></circle><circle cx="7.800" cy="7.500" r="0.900" fill="#9a9d9f"></circle><path d="M4 11q2 1.200 4 0" stroke="#9a9d9f" stroke-width="0.900" fill="none"></path></svg>
<div class="a" style="left:1261px;top:762px;width:12px;height:12px;border-radius:50%;background:#5b5e60"></div>
<!--/BOTTOM-->
<div class="a" id="dlg">
<!--DLG-->
<div class="a" id="dtitle"></div>
<div class="tl" style="left:8px;background:#fc5b57;border:0.5px solid #e0443e"></div><div class="tl" style="left:28px;background:#d6d6d6;border:0.5px solid #c0c0c0"></div><div class="tl" style="left:48px;background:#00c44f;border:0.5px solid #12ac28"></div>
<div class="t" style="left: 211px; top: 4px; font-size: 13.35px; color: rgb(60, 60, 60);">Create New Class</div>
<div class="t dl" style="top: 35.75px; font-size: 13.75px;">Name:</div>
<div class="t dl" style="top: 67.75px; font-size: 14.04px;">Kind:</div>
<div class="t dl" style="top: 99.75px; font-size: 13.59px;">Superclass:</div>
<div class="t dl" style="top: 131.75px; font-size: 13.87px;">Interface(s):</div>
<div class="t dl" style="top: 163.75px; font-size: 13.19px;">Package:</div>
<div class="t dl" style="top: 194.5px; font-size: 15.24px;">Visibility:</div>
<div class="t dl" style="top: 224.5px; font-size: 14.43px;">Modifiers:</div>
<div class="a" style="left:96.5px;top:32px;width:419.5px;height:22.5px;border-radius:4px;background:#45494a;border:2px solid #46739e;box-shadow:0 0 1px 0.5px rgba(70,115,158,.4)"></div>
<div class="t" style="left: 103px; top: 36.7px; font-size: 12.44px; color: rgb(187, 187, 187);">Pessoa</div>
<div class="a" style="left:146px;top:35.5px;width:1px;height:15.5px;background:#d0d0d0"></div>
<div class="a" style="left:97px;top:63px;width:420px;height:25px;border-radius:4px;background:#3c3f41;border:1px solid #676a6b"></div>
<div class="a" style="left:494px;top:64px;width:1px;height:23px;background:#676a6b"></div>
<svg style="left:501px;top:72.5px" width="8" height="6" viewBox="0 0 8 6"><path d="M0 0h8l-4 6z" fill="#c0c3c5"></path></svg>
<svg style="left:103px;top:68px" width="14" height="14" viewBox="0 0 14 14"><circle cx="7" cy="7" r="6.4" fill="#8ccdee" stroke="#c2e7f8" stroke-width="1"></circle><path d="M9.2 5.3a2.5 2.5 0 1 0 0 3.4" stroke="#2f4a5c" stroke-width="1.4" fill="none"></path></svg><div class="t" style="left: 122px; top: 67.5px; font-size: 13.4px; color: rgb(187, 187, 187);">Class</div>
<div class="fld" style="left:97px;top:97px"></div>
<div class="fld" style="left:97px;top:129px"></div>
<div class="fld" style="left:97px;top:161px"></div>
<div class="t" style="left: 103px; top: 164px; font-size: 14.32px; color: rgb(187, 187, 187);">com.academiajedi.androiddveloper.exemplosqlite</div>
<div class="radio on" style="left:98.5px;top:195px"></div><div class="radio" style="left:240px;top:195px"></div><div class="radio on" style="left:98.5px;top:225px"></div><div class="radio" style="left:240px;top:225px"></div><div class="radio" style="left:396px;top:225px"></div>
<div class="t" style="left: 120px; top: 194.5px; font-size: 13.95px; color: rgb(187, 187, 187);">P<span class="u">u</span>blic</div>
<div class="t" style="left: 262px; top: 194.5px; font-size: 13.4px; color: rgb(187, 187, 187);">Package P<span class="u">r</span>ivate</div>
<div class="t" style="left: 120px; top: 224.5px; font-size: 13.82px; color: rgb(187, 187, 187);">N<span class="u">o</span>ne</div>
<div class="t" style="left: 262px; top: 224.5px; font-size: 14.46px; color: rgb(187, 187, 187);"><span class="u">A</span>bstract</div>
<div class="t" style="left: 417.8px; top: 224.5px; font-size: 13.85px; color: rgb(187, 187, 187);"><span class="u">F</span>inal</div>
<div class="a" style="left:12.5px;top:286px;width:503.5px;height:1px;background:#515456"></div>
<div class="a" style="left:16px;top:311.5px;width:13px;height:13px;border-radius:2px;background:linear-gradient(#73777a,#5d6163);border:1px solid #2f3132;box-shadow:0 1px 0 rgba(255,255,255,.07)"></div>
<div class="t" style="left: 36px; top: 310px; font-size: 13.81px; color: rgb(187, 187, 187);">Show Select Overrides <span class="u">D</span>ialog</div>
<div class="a" style="left:16.5px;top:382.5px;width:22px;height:22px;border-radius:50%;background:linear-gradient(#5a5e60,#484c4e);border:1px solid #666a6c"></div>
<div class="t" style="left:22.4px;top:383.5px;font-size:17px;line-height:19px;height:19px;font-weight:bold;color:#1a9fe0">?</div>
<div class="btn" style="left:377px">Cancel</div>
<div class="btn" style="left:449px;background:linear-gradient(#36506f,#27384f);border-color:#64676a;color:#d8d8d8">OK</div>
<!--/DLG-->
</div>

</body></html>
